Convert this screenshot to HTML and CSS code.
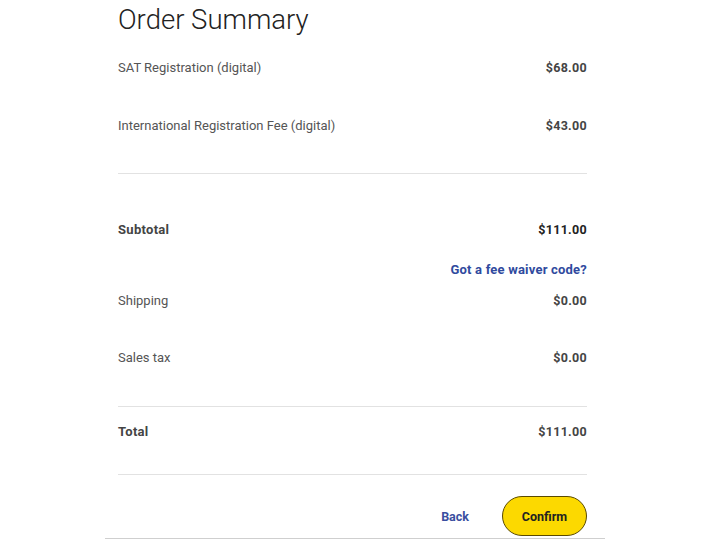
FILE: index.html
```html
<!DOCTYPE html>
<html>
<head>
<meta charset="utf-8">
<link rel="stylesheet" href="styles.css">
</head>
<body>
<div class="summary">
  <h1 class="title">Order Summary</h1>
  <div class="row r-sat"><span class="label">SAT Registration (digital)</span><span class="value">$68.00</span></div>
  <div class="row r-intl"><span class="label">International Registration Fee (digital)</span><span class="value">$43.00</span></div>
  <div class="divider d1"></div>
  <div class="row r-sub"><span class="label strong">Subtotal</span><span class="value dark">$111.00</span></div>
  <div class="row r-waiver"><a class="waiver" href="#">Got a fee waiver code?</a></div>
  <div class="row r-ship"><span class="label">Shipping</span><span class="value">$0.00</span></div>
  <div class="row r-tax"><span class="label">Sales tax</span><span class="value">$0.00</span></div>
  <div class="divider d2"></div>
  <div class="row r-total"><span class="label strong">Total</span><span class="value">$111.00</span></div>
  <div class="divider d3"></div>
  <div class="actions">
    <a class="back" href="#">Back</a>
    <button class="confirm">Confirm</button>
  </div>
</div>
<div class="bottom-line"></div>
</body>
</html>
```
FILE: styles.css
```css
html, body {
  margin: 0;
  padding: 0;
  background: #fff;
}
body {
  font-family: Roboto, "Liberation Sans", sans-serif;
  width: 720px;
  height: 540px;
  overflow: hidden;
}
.summary {
  margin-left: 118px;
  width: 469px;
  display: flex;
  flex-direction: column;
}
.title {
  margin: 0;
  height: 39px;
  line-height: 39px;
  font-size: 27.5px;
  font-weight: 300;
  color: #222;
}
.row {
  display: flex;
  justify-content: space-between;
  align-items: center;
  height: 20px;
  line-height: 20px;
}
.label {
  font-size: 13px;
  color: #555;
}
.label.strong {
  font-weight: 700;
  font-size: 13px;
  color: #444;
  letter-spacing: 0.3px;
}
.value {
  font-size: 12.5px;
  font-weight: 700;
  color: #444;
  letter-spacing: 0.3px;
}
.value.dark { color: #222; }
.r-sat { margin-top: 19px; }
.r-intl { margin-top: 38px; }
.divider {
  height: 1px;
  background: #e2e2e2;
}
.d1 { margin-top: 37px; }
.r-sub { margin-top: 46px; }
.r-waiver { margin-top: 20px; justify-content: flex-end; }
.waiver {
  color: #2f4a9e;
  font-weight: 700;
  font-size: 13px;
  letter-spacing: 0.2px;
  text-decoration: none;
}
.r-ship { margin-top: 11px; }
.r-tax { margin-top: 37px; }
.d2 { margin-top: 38px; }
.r-total { margin-top: 15px; }
.d3 { margin-top: 32px; }
.actions {
  margin-top: 21px;
  display: flex;
  justify-content: flex-end;
  align-items: center;
  gap: 33px;
}
.back {
  color: #3a4fa0;
  font-weight: 700;
  font-size: 12.5px;
  text-decoration: none;
}
.confirm {
  width: 85px;
  height: 40px;
  border-radius: 20px;
  border: 1px solid #5a4a00;
  background: #fcd900;
  font-family: Roboto, "Liberation Sans", sans-serif;
  font-weight: 700;
  font-size: 12.5px;
  color: #222;
  padding: 0;
}
.bottom-line {
  margin-left: 105px;
  width: 500px;
  height: 1px;
  margin-top: 2px;
  background: #cfcfcf;
}
```
